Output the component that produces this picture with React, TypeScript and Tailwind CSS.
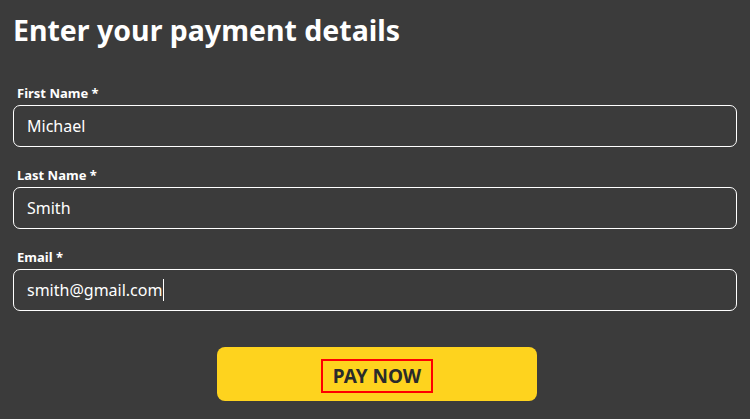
import { useState } from 'react';

const fields = [
  { id: 'first', label: 'First Name', value: 'Michael' },
  { id: 'last', label: 'Last Name', value: 'Smith' },
  { id: 'email', label: 'Email', value: 'smith@gmail.com', active: true },
];

function Field({ label, value, active }: { label: string; value: string; active?: boolean }) {
  return (
    <label className="flex flex-col">
      <span className="pl-1 text-[13px] font-bold leading-[16px] text-white">
        {label} *
      </span>
      <div className="mt-[4px] flex h-[42px] items-center rounded-[7px] border border-white px-[13px] text-[16px] text-white">
        <span>{value}</span>
        {active && <span className="ml-[1px] h-[22px] w-px bg-white" />}
      </div>
    </label>
  );
}

export default function App() {
  const [submitted] = useState(false);

  return (
    <div
      className="h-[419px] w-full overflow-hidden bg-[#3b3b3b] px-[13px] pt-[10px]"
      style={{ fontFamily: '"Noto Sans", "Open Sans", sans-serif' }}
    >
      <h1 className="text-[28.5px] font-bold leading-[40px] text-white">
        Enter your payment details
      </h1>

      {/* Form fields */}
      <div className="mt-[35px] flex flex-col gap-[20px]">
        {fields.map((f) => (
          <Field key={f.id} label={f.label} value={f.value} active={f.active} />
        ))}
      </div>

      <div className="mt-[36px] flex justify-center pl-[4px]">
        <button className="flex h-[54px] w-[320px] items-center justify-center rounded-[8px] bg-[#fed31e]">
          <span className="mt-[4px] border-2 border-[#ff0000] px-[10px] py-[5px] text-[19px] font-bold leading-[20px] text-[#2b2b2b]">
            {submitted ? 'PAID' : 'PAY NOW'}
          </span>
        </button>
      </div>
    </div>
  );
}
